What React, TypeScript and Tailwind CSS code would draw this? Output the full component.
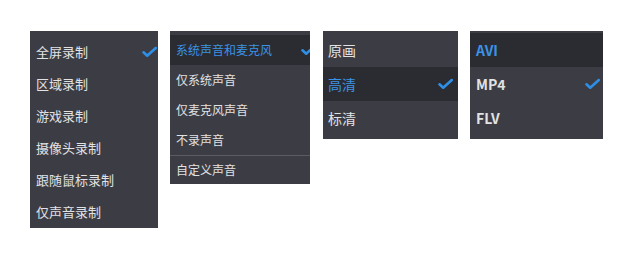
import React from "react";

type Item = { label: string; active?: boolean; checked?: boolean };

const font = { fontFamily: '"Noto Sans CJK SC", "Noto Sans", sans-serif' };

function Check({ className = "" }: { className?: string }) {
	return (
		<svg className={className} width="15" height="11" viewBox="0 0 15 11" fill="none">
			<path d="M1.5 5.8 L5.2 9.2 L13.8 1.5" stroke="#2f8fe6" strokeWidth="2.6" strokeLinecap="round" strokeLinejoin="round" />
		</svg>
	);
}

function Row({ item, h, pl, textSize, checkRight }: { item: Item; h: string; pl: string; textSize: string; checkRight: string }) {
	return (
		<div className={`relative flex items-center ${h} ${pl} ${textSize} ${item.active ? "bg-[#2b2c31] text-[#3b93e6]" : "text-[#e2e2e4]"}`}>
			<span className="whitespace-nowrap">{item.label}</span>
			{item.checked && <Check className={`absolute top-1/2 -translate-y-1/2 ${checkRight}`} />}
		</div>
	);
}

const mode: Item[] = [
	{ label: "全屏录制", checked: true },
	{ label: "区域录制" },
	{ label: "游戏录制" },
	{ label: "摄像头录制" },
	{ label: "跟随鼠标录制" },
	{ label: "仅声音录制" },
];

const sound: Item[] = [
	{ label: "系统声音和麦克风", active: true, checked: true },
	{ label: "仅系统声音" },
	{ label: "仅麦克风声音" },
	{ label: "不录声音" },
];

const quality: Item[] = [
	{ label: "原画" },
	{ label: "高清", active: true, checked: true },
	{ label: "标清" },
];

const format: Item[] = [
	{ label: "AVI", active: true },
	{ label: "MP4", checked: true },
	{ label: "FLV" },
];

export default function App() {
	return (
		<div className="w-[634px] h-[254px] bg-white flex items-start gap-3 pl-[30px] pt-[31px]" style={font}>
			<div className="w-[128px] h-[197px] bg-[#3c3d44] pt-[5px]">
				{mode.map(it => <Row key={it.label} item={it} h="h-8" pl="pl-[6px]" textSize="text-[13px]" checkRight="right-[1px]" />)}
			</div>

			<div className="w-[140px] h-[153px] bg-[#3c3d44] pt-1 overflow-hidden">
				{sound.map(it => <Row key={it.label} item={it} h="h-[30px]" pl="pl-[6px]" textSize="text-[12px]" checkRight="right-[-6px]" />)}
				<div className="h-px bg-[#5b5c62]"></div>
				<Row item={{ label: "自定义声音" }} h="h-[28px]" pl="pl-[6px]" textSize="text-[12px]" checkRight="" />
			</div>

			<div className="w-[135px] h-[108px] bg-[#3c3d44] pt-[2px] ml-px">
				{quality.map(it => <Row key={it.label} item={it} h="h-[34px]" pl="pl-[5px]" textSize="text-[14px]" checkRight="right-[5px]" />)}
			</div>

			<div className="w-[133px] h-[108px] bg-[#3c3d44] pt-[2px] font-semibold">
				{format.map(it => <Row key={it.label} item={it} h="h-[34px]" pl="pl-[6px]" textSize="text-[14px]" checkRight="right-[3px]" />)}
			</div>
		</div>
	);
}
